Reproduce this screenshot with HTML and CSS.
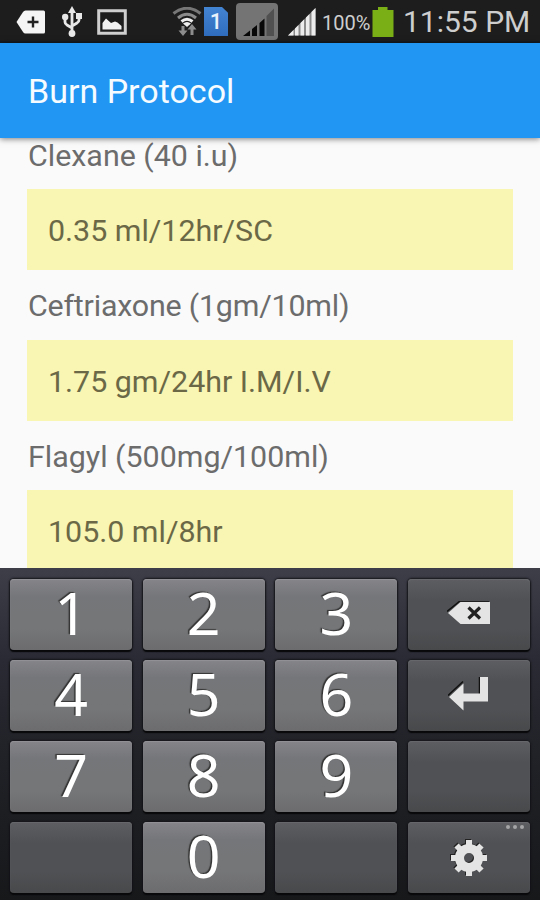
FILE: index.html
```html
<!DOCTYPE html>
<html lang="en">
  <head>
    <meta charset="UTF-8" />
    <meta name="viewport" content="width=device-width, initial-scale=1.0" />
    <title>Burn Protocol</title>
    <link rel="stylesheet" href="styles.css">
  </head>

  <body>
    <div class="status-bar">
      <div class="notifications">
        <svg width="30" height="26" viewBox="0 0 30 26">
          <path d="M0.5 13 7 3Q8 1.5 9.500 1.500H27.500Q29 1.500 29 3V23Q29 24.500 27.500 24.500H9.500Q8 24.500 7 23Z" fill="#f5f5f5" />
          <path d="M17 7.500V18.500M11.500 13H22.500" stroke="#222" stroke-width="2.400" />
        </svg>
        <svg width="20" height="32" viewBox="0 0 20 32" fill="none" stroke="#e8e8e8" stroke-width="2.800">
          <path d="M10 5V26M3 11V16Q3 18 5 19L10 22M17 10V14Q17 16 15 17L10 20" />
          <path d="M10 0 14 7H6Z" fill="#e8e8e8" stroke="none" />
          <circle cx="10" cy="27.500" r="3.400" fill="#e8e8e8" stroke="none" />
          <circle cx="3.200" cy="11" r="3.200" fill="#e8e8e8" stroke="none" />
          <path d="M14 7H20V13H14Z" fill="#e8e8e8" stroke="none" />
        </svg>
        <svg width="30" height="26" viewBox="0 0 30 26">
          <path d="M1.700 1.700H28.300V24.300H1.700Z" fill="none" stroke="#cfcfcf" stroke-width="3" />
          <path d="M5.500 20.500V14L9 9.500 14 14 18 12.500 20.500 13.500 24.500 17V20.500Z" fill="#f3f3f3" />
        </svg>
      </div>

      <div class="system">
        <svg width="30" height="30" viewBox="0 0 30 30" fill="none" stroke-width="3">
          <path d="M1.500 6.500Q15-4 28.500 6.500" stroke="#777" />
          <path d="M6 11Q15 3.500 24 11" stroke="#8b8b8b" />
          <path d="M9.500 14.500Q15 10 20.500 14.500" stroke="#eee" />
          <path d="M11 16.500Q15 13.500 19 16.500L15 20Z" fill="#eee" />
          <path d="M11 19V25M20 22V28" stroke="#8d8d8d" />
          <path d="M6.500 23.500H15.500L11 29ZM15.500 22.500 20 17 24.500 22.500Z" fill="#8d8d8d" />
        </svg>
        <div class="sim">1</div>
        <svg class="roaming" width="42" height="37" viewBox="0 0 42 37">
          <rect width="42" height="37" rx="4" fill="#747474" />
          <path d="M7 33 14 27.500V33ZM16 33V26L21 22V33ZM23.500 33V20L28.500 15.500V33Z" fill="#080808" />
          <path d="M30.500 33V13L38 5.500V33Z" fill="#505050" />
        </svg>
        <svg class="signal" width="28" height="28" viewBox="0 0 28 28">
          <path d="M0 27.500 27.500 0V27.500Z" fill="#8a8a8a" />
          <path d="M0 27.500 5.500 22V27.500ZM7 27.500V20.500L10.500 17V27.500ZM12.500 27.500V15L16 11.500V27.500ZM18 27.500V9.500L21.500 6V27.500ZM23.500 27.500V4L27.500 0V27.500Z" fill="#ececec" />
        </svg>
        <span class="percent">100%</span>
        <svg class="battery" width="22" height="30" viewBox="0 0 22 30">
          <path d="M0.500 3H6V0H15.500V3H21.500V30H0.500Z" fill="#7aaf15" />
        </svg>
        <span class="time">11:55 PM</span>
      </div>
    </div>

    <header class="app-bar">
      <h1>Burn Protocol</h1>
    </header>

    <main class="doses">
      <p class="drug">Clexane (40 i.u)</p>
      <p class="dose">0.35 ml/12hr/SC</p>
      <p class="drug tight">Ceftriaxone (1gm/10ml)</p>
      <p class="dose">1.75 gm/24hr I.M/I.V</p>
      <p class="drug">Flagyl (500mg/100ml)</p>
      <p class="dose">105.0 ml/8hr</p>
    </main>

    <div class="keyboard">
      <button class="key">1</button>
      <button class="key">2</button>
      <button class="key">3</button>
      <button class="key dark" aria-label="Delete">
        <svg width="44" height="24" viewBox="0 0 44 24">
          <path d="M0 10.500 13 0H42" fill="none" stroke="#111" stroke-width="1.500" />
          <path d="M1 12 13.500 1H43V23H13.500Z" fill="#e4e4e4" />
          <path d="M21.500 6.500 33 17.500M33 6.500 21.500 17.500" stroke="#222" stroke-width="3.200" />
        </svg>
      </button>

      <button class="key">4</button>
      <button class="key">5</button>
      <button class="key">6</button>
      <button class="key dark" aria-label="Enter">
        <svg width="42" height="36" viewBox="0 0 42 36">
          <path d="M0 19.500 15 5.500M31.500 18V1" fill="none" stroke="#111" stroke-width="1.500" />
          <path d="M1 21 15.500 7.500V17.500H32V1H40V25.500H15.500V34.500Z" fill="#e4e4e4" />
        </svg>
      </button>

      <button class="key">7</button>
      <button class="key">8</button>
      <button class="key">9</button>
      <button class="key dark"></button>

      <button class="key dark"></button>
      <button class="key">0</button>
      <button class="key dark"></button>
      <button class="key dark" aria-label="Settings">
        <span class="more"><i></i><i></i><i></i></span>
        <svg class="gear" width="38" height="38" viewBox="-19 -19 38 38">
          <circle r="9.500" fill="none" stroke="#e4e4e4" stroke-width="9" />
          <path d="M0-18V-11M0 18V11M-18 0H-11M18 0H11M-12.500-12.500-8-8M12.500 12.500 8 8M-12.500 12.500-8 8M12.500-12.500 8-8" stroke="#e4e4e4" stroke-width="6" />
        </svg>
      </button>
    </div>
  </body>
</html>
```

FILE: styles.css
```css
* {
  margin: 0;
  padding: 0;
  box-sizing: border-box;
}

body {
  display: flex;
  flex-direction: column;
  width: 540px;
  height: 900px;
  overflow: hidden;
  font-family: Roboto, sans-serif;
  background-color: #fafafa;
}

svg {
  display: block;
  flex: none;
}

.status-bar {
  display: flex;
  flex: none;
  justify-content: space-between;
  height: 43px;
  padding: 0 11px 0 16px;
  color: #cecece;
  background-color: #1d1d1d;
  border-bottom: 2px solid #141a20;
}

.notifications {
  display: flex;
  gap: 16px;
  align-items: center;
  padding-top: 2px;
}

.notifications svg:last-child {
  margin-left: -1px;
}

.system {
  display: flex;
  align-items: center;
  padding-top: 2px;
}

.sim {
  width: 24px;
  height: 29px;
  margin: 0 8px 0 2px;
  color: #e9f1fb;
  font-size: 22px;
  font-weight: 500;
  line-height: 29px;
  text-align: center;
  background: linear-gradient(#4384d2, #2f6cbd);
  clip-path: polygon(0 0, 75% 0, 100% 20%, 100% 100%, 0 100%);
}

.signal {
  margin: 0 6px 0 10px;
}

.percent {
  width: 48px;
  padding-top: 2px;
  font-size: 20px;
  white-space: nowrap;
}

.battery {
  margin: 0 9px 0 2px;
}

.time {
  width: 126px;
  font-size: 30px;
  white-space: nowrap;
}

.app-bar {
  display: flex;
  flex: none;
  align-items: center;
  height: 95px;
  padding: 0 28px;
  background-color: #2196f3;
  box-shadow: 0 1px 6px rgba(0, 0, 0, 0.5);
  z-index: 1;
}

.app-bar h1 {
  color: #f5fbff;
  font-size: 34px;
  font-weight: 400;
}

.doses {
  flex: 1;
  min-height: 0;
  padding: 0 27px;
  overflow: hidden;
  color: #6c6c6c;
  font-size: 30.4px;
}

.drug {
  height: 69.5px;
  padding-left: 1px;
  line-height: 72px;
}

.drug:first-child {
  height: 51px;
  line-height: 36px;
}

.tight {
  letter-spacing: -0.2px;
}

.dose {
  height: 81px;
  padding-left: 21px;
  line-height: 83px;
  color: #6a6846;
  background-color: #f9f5b2;
}

.keyboard {
  display: grid;
  flex: none;
  grid-template-columns: repeat(4, 1fr);
  grid-template-rows: repeat(4, 1fr);
  gap: 10px 10.5px;
  height: 332px;
  padding: 11px 10px 8px;
  background: linear-gradient(#3d3e48, #292a33 28%, #202126 60%, #17181a);
}

.key {
  display: flex;
  position: relative;
  align-items: center;
  justify-content: center;
  padding-bottom: 5px;
  color: white;
  font-family: "Noto Sans", sans-serif;
  font-size: 59px;
  line-height: 66px;
  text-shadow: -1.5px -1.5px 1px #333;
  border: none;
  border-radius: 4px;
  background: linear-gradient(#858589, #757679 25%, #757677 70%, #6c6c6e);
  box-shadow: 0 2px 1px #08080a, 0 0 2px 1px #15151a, inset 0 1px 1px #929297;
}

.dark {
  padding-bottom: 4px;
  background: linear-gradient(#5d5e61, #505154 30%, #505154 70%, #48494b);
  box-shadow: 0 2px 1px #08080a, 0 0 2px 1px #15151a, inset 0 1px 1px #68696d;
}

.gear {
  margin-top: 4px;
  margin-left: 1px;
  filter: drop-shadow(-1px -1px 0 #222);
}

.more {
  position: absolute;
  top: 3px;
  right: 6px;
  display: flex;
  gap: 3px;
}

.more i {
  width: 4px;
  height: 4px;
  border-radius: 50%;
  background-color: #a5a5a7;
}
```
